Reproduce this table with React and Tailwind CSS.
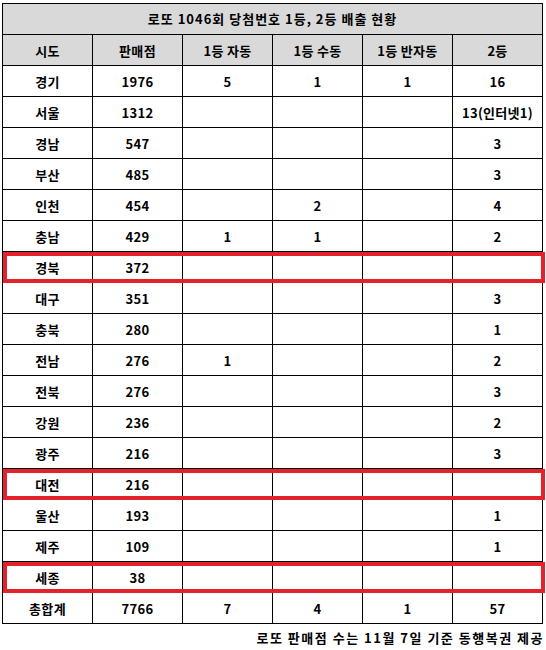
import React from 'react';

const headers = ['시도', '판매점', '1등 자동', '1등 수동', '1등 반자동', '2등'];

const rows = [
    ['경기', '1976', '5', '1', '1', '16'],
    ['서울', '1312', '', '', '', '13(인터넷1)'],
    ['경남', '547', '', '', '', '3'],
    ['부산', '485', '', '', '', '3'],
    ['인천', '454', '', '2', '', '4'],
    ['충남', '429', '1', '1', '', '2'],
    ['경북', '372', '', '', '', '', true],
    ['대구', '351', '', '', '', '3'],
    ['충북', '280', '', '', '', '1'],
    ['전남', '276', '1', '', '', '2'],
    ['전북', '276', '', '', '', '3'],
    ['강원', '236', '', '', '', '2'],
    ['광주', '216', '', '', '', '3'],
    ['대전', '216', '', '', '', '', true],
    ['울산', '193', '', '', '', '1'],
    ['제주', '109', '', '', '', '1'],
    ['세종', '38', '', '', '', '', true],
    ['총합계', '7766', '7', '4', '1', '57'],
];

const font = { fontFamily: '"Noto Sans CJK KR", "Noto Sans", sans-serif' };

const Row = ({ cells, gray, marked }) => (
    <div className={`relative grid grid-cols-[repeat(6,90px)] ${gray ? 'bg-[#d9d9d9]' : 'bg-white'}`}>
        {cells.map((c, i) => (
            <div key={i} className="h-[31px] border-r border-b border-black flex items-center justify-center text-[13px] font-bold text-black leading-none tracking-[0.3px]">
                {c}
            </div>
        ))}
        {marked && (
            <div className="absolute top-0 bottom-0 left-0 right-[-2px] border-[4px] border-[#e3222b]" />
        )}
    </div>
);

const App = () => {
    return (
        <div className="w-[546px] h-[650px] bg-white pt-[3px] pl-[2px]" style={font}>
            <div className="w-[541px] border-l border-t border-black">
                <div className="h-[31px] border-r border-b border-black bg-[#d9d9d9] flex items-center justify-center text-[13px] font-bold text-black tracking-[1px]">
                    로또 1046회 당첨번호 1등, 2등 배출 현황
                </div>
                <Row cells={headers} gray />
                {rows.map((r, i) => (
                    <Row key={i} cells={r.slice(0, 6)} marked={r[6]} />
                ))}
            </div>
            <div className="w-[542px] mt-[4px] text-right text-[13px] font-bold text-black tracking-[1.5px]">
                로또 판매점 수는 11월 7일 기준 동행복권 제공
            </div>
        </div>
    );
};

export default App;
